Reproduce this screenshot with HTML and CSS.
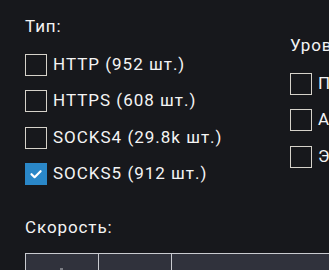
FILE: index.html
```html
<!DOCTYPE html>
<html lang="ru">
<head>
<meta charset="utf-8">
<link rel="stylesheet" href="styles.css">
</head>
<body>
<div class="filters">
  <div class="col col-type">
    <div class="label">Тип:</div>
    <div class="options">
      <label class="opt"><span class="box"></span><span class="txt">HTTP (952 шт.)</span></label>
      <label class="opt"><span class="box"></span><span class="txt">HTTPS (608 шт.)</span></label>
      <label class="opt"><span class="box"></span><span class="txt">SOCKS4 (29.8k шт.)</span></label>
      <label class="opt"><span class="box checked"><svg viewBox="0 0 22 22" width="22" height="22"><path d="M6.5 11.2 L9.6 14.2 L15.6 8.2" fill="none" stroke="#fff" stroke-width="2.2" stroke-linecap="round" stroke-linejoin="round"/></svg></span><span class="txt">SOCKS5 (912 шт.)</span></label>
    </div>
    <div class="label speed-label">Скорость:</div>
  </div>
  <div class="col col-anon">
    <div class="label">Уровень анонимности:</div>
    <div class="options">
      <label class="opt"><span class="box"></span><span class="txt">Прозрачный</span></label>
      <label class="opt"><span class="box"></span><span class="txt">Анонимный</span></label>
      <label class="opt"><span class="box"></span><span class="txt">Элитный</span></label>
    </div>
  </div>
</div>
<div class="speed">
  <div class="cell first"><span class="mark"></span></div>
  <div class="cell"></div>
  <div class="cell"></div>
</div>
</body>
</html>
```
FILE: styles.css
```css
html, body {
  margin: 0;
  padding: 0;
  overflow: hidden;
  background: #17181c;
  color: #f4f4f4;
  font-family: Roboto, "Liberation Sans", sans-serif;
}
.filters {
  display: flex;
  padding: 16px 0 0 25px;
  width: 600px;
}
.col-type {
  width: 265px;
  flex: none;
}
.col-anon {
  padding-top: 19px;
  flex: none;
}
.label {
  font-size: 17px;
  line-height: 21px;
  letter-spacing: 0.9px;
  white-space: nowrap;
}
.options {
  margin-top: 17px;
  display: flex;
  flex-direction: column;
  gap: 14.3px;
}
.opt {
  display: flex;
  align-items: center;
  height: 22px;
  white-space: nowrap;
}
.box {
  width: 22px;
  height: 22px;
  box-sizing: border-box;
  border: 1px solid #d6d2ca;
  flex: none;
  margin-right: 6px;
  display: flex;
}
.box.checked {
  background: #2a87c8;
  border-color: #2a87c8;
}
.box.checked svg {
  margin: -1px;
}
.txt {
  font-size: 17px;
  line-height: 22px;
  letter-spacing: 1px;
  margin-top: -2px;
}
.speed-label {
  margin-top: 32px;
}
.speed {
  margin: 15px 0 0 25px;
  display: flex;
  width: 400px;
  height: 40px;
  background: #30323c;
  border: 1px solid #c9cbd0;
}
.cell {
  width: 72px;
  border-right: 1px solid #c9cbd0;
  position: relative;
  flex: none;
}
.cell:last-child {
  border-right: none;
  flex: 1;
}
.mark {
  position: absolute;
  left: 34px;
  top: 14px;
  width: 3px;
  height: 4px;
  background: #7b7d84;
}
```
